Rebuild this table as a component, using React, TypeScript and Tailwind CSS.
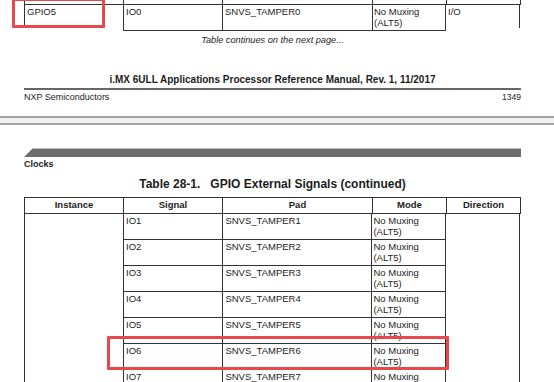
import React from 'react';

const rows = [
  { signal: 'IO1', pad: 'SNVS_TAMPER1' },
  { signal: 'IO2', pad: 'SNVS_TAMPER2' },
  { signal: 'IO3', pad: 'SNVS_TAMPER3' },
  { signal: 'IO4', pad: 'SNVS_TAMPER4' },
  { signal: 'IO5', pad: 'SNVS_TAMPER5' },
  { signal: 'IO6', pad: 'SNVS_TAMPER6' },
  { signal: 'IO7', pad: 'SNVS_TAMPER7' },
];

function Mode() {
  return (
    <>
      No Muxing
      <br />
      (ALT5)
    </>
  );
}

export default function App() {
  return (
    <div className="relative w-[554px] h-[382px] overflow-hidden bg-white text-[#1c1c1c] font-['Liberation_Sans',Arial,sans-serif] text-[9.5px] leading-[11px]">
      {/* previous page, bottom */}
      <div className="h-[116px]">
        <div className="ml-[24px] w-[497px]">
          <div className="flex h-[4px]">
            <div className="w-[99px] border-l border-[#333]" />
            <div className="w-[99px] border-l border-[#333]" />
            <div className="w-[150px] border-l border-[#333]" />
            <div className="w-[74px] border-l border-[#333]" />
            <div className="w-[75px] border-x border-[#333]" />
          </div>
          <div className="flex items-start border-t border-[#333]">
            <div className="w-[99px] h-[21px] border-l border-[#333] pl-[2px] pt-[1px]">GPIO5</div>
            <div className="w-[99px] h-[26px] border-l border-b border-[#333] pl-[2px] pt-[1px]">IO0</div>
            <div className="w-[150px] h-[26px] border-l border-b border-[#333] pl-[2px] pt-[1px]">SNVS_TAMPER0</div>
            <div className="w-[74px] h-[26px] border-x border-b border-[#333] pl-[1px] pt-[1px]">
              <Mode />
            </div>
            <div className="w-[74px] h-[23px] border-r border-[#333] pl-[2px] pt-[1px]">I/O</div>
          </div>
        </div>
        <p className="mt-[4px] ml-[24px] w-[497px] text-center italic text-[9.2px] leading-[10px]">
          Table continues on the next page...
        </p>
        <p className="mt-[30px] ml-[24px] w-[497px] text-center font-bold text-[10px] leading-[10px]">
          i.MX 6ULL Applications Processor Reference Manual, Rev. 1, 11/2017
        </p>
        <div className="mt-[3px] ml-[24px] w-[497px] border-t-2 border-[#666]" />
        <div className="mt-[2px] ml-[24px] w-[497px] flex justify-between items-baseline leading-[10px]">
          <span className="text-[9px]">NXP Semiconductors</span>
          <span className="text-[8.5px]">1349</span>
        </div>
      </div>

      {/* page break */}
      <div className="h-[9px] border-y-2 border-[#a3a3a3] bg-[#f1f1f1]" />

      {/* next page, top */}
      <div className="mt-[23px] ml-[24px] w-[497px] h-[9px] bg-[#6d6d6d] border-t border-[#bdbdbd] [clip-path:polygon(9px_0,100%_0,100%_100%,0_100%)]" />
      <p className="mt-[2px] ml-[24px] font-bold text-[9px] leading-[10px]">Clocks</p>
      <p className="mt-[8px] ml-[24px] w-[497px] text-center font-bold text-[12px] leading-[14px] whitespace-pre">
        {'Table 28-1.   GPIO External Signals (continued)'}
      </p>

      <div className="mt-[6px] ml-[24px] w-[497px]">
        <div className="flex h-[17px] border-y border-[#333] font-bold text-center leading-[14px]">
          <div className="w-[99px] border-l border-[#333]">Instance</div>
          <div className="w-[99px] border-l border-[#333]">Signal</div>
          <div className="w-[150px] border-l border-[#333]">Pad</div>
          <div className="w-[74px] border-l border-[#333]">Mode</div>
          <div className="w-[75px] border-x border-[#333]">Direction</div>
        </div>
        <div className="flex">
          <div className="w-[99px] border-l border-[#333]" />
          <div className="w-[323px] border-x border-[#333]">
            {rows.map((r) => (
              <div key={r.signal} className="flex h-[26px] border-b border-[#333]">
                <div className="w-[99px] pl-[2px] pt-[1px]">{r.signal}</div>
                <div className="w-[150px] border-l border-[#333] pl-[2px] pt-[1px]">{r.pad}</div>
                <div className="w-[74px] border-l border-[#333] pl-[1px] pt-[1px]">
                  <Mode />
                </div>
              </div>
            ))}
          </div>
          <div className="w-[74px] border-r border-[#333]" />
        </div>
      </div>

      {/* highlight boxes */}
      <div className="absolute left-[12px] top-[-2px] w-[93px] h-[30px] border-[3px] border-[#e8484c] rounded-[1px]" />
      <div className="absolute left-[107px] top-[336px] w-[342px] h-[34px] border-[3px] border-[#e8484c] rounded-[1px]" />
    </div>
  );
}
